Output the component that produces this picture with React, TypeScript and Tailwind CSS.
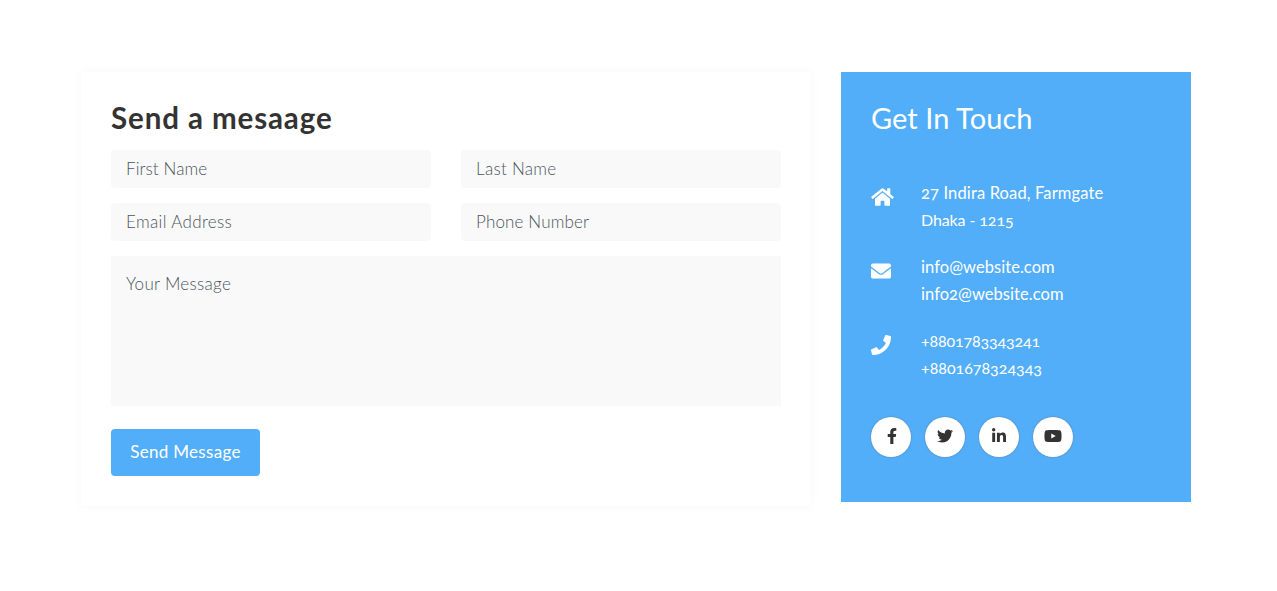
import type { ReactNode } from 'react';
import {
  FaHome,
  FaEnvelope,
  FaPhone,
  FaFacebookF,
  FaTwitter,
  FaLinkedinIn,
  FaYoutube,
} from 'react-icons/fa';

const field =
  'block h-[38px] w-full rounded bg-[#f9f9f9] px-[15px] pb-0.5 text-[17px] font-light text-[#4c565e] placeholder:text-[#4c565e] placeholder:opacity-100 outline-none';

function ContactRow({ icon, children }: { icon: ReactNode; children: ReactNode }) {
  return (
    <div className="flex h-[54px]">
      <div className="w-[50px] shrink-0 pt-[7px] text-[20px]">{icon}</div>
      <div className="-mt-px flex flex-col text-base leading-[27px] whitespace-nowrap [font-variant-numeric:oldstyle-nums]">
        {children}
      </div>
    </div>
  );
}

function Social({ label, children }: { label: string; children: ReactNode }) {
  return (
    <a
      href="#"
      aria-label={label}
      className="flex size-10 items-center justify-center rounded-full bg-white pb-0.5 text-base text-[#333] shadow-[0_0_2px_rgba(90,80,70,0.5)]"
    >
      {children}
    </a>
  );
}

export default function App() {
  return (
    <main className="flex h-[591px] w-[1277px] items-start gap-[30px] bg-white pt-[72px] pl-[81px] font-[Lato,sans-serif]">
      <section className="h-[434px] w-[730px] bg-white px-[30px] pt-[29px] shadow-[0_0_10px_rgba(0,0,0,0.04)]">
        <h2 className="h-[49px] text-[29.5px] leading-[34px] font-bold text-[#333]">
          <span className="tracking-[0.9px]">Send a mesaage</span>
        </h2>
        <form>
          <div className="grid grid-cols-2 gap-x-[30px] gap-y-[15px]">
            <input className={`${field} tracking-[0.1px]`} placeholder="First Name" />
            <input className={`${field} tracking-[0.3px]`} placeholder="Last Name" />
            <input className={`${field} tracking-[0.35px]`} placeholder="Email Address" />
            <input className={`${field} tracking-[0.15px]`} placeholder="Phone Number" />
            <textarea
              className="col-span-2 block h-[150px] resize-none bg-[#f9f9f9] px-[15px] pt-4 text-[17px] leading-6 font-light tracking-[0.3px] text-[#4c565e] outline-none placeholder:text-[#4c565e] placeholder:opacity-100"
              placeholder="Your Message"
            />
          </div>
          <button
            type="button"
            className="mt-[23px] flex h-[47px] w-[149px] items-center justify-center rounded bg-[#53aefa] pb-0.5 text-[17px] tracking-[0.3px] whitespace-nowrap text-white"
          >
            <span>Send Message</span>
          </button>
        </form>
      </section>
      <aside className="h-[430px] w-[350px] bg-[#53aefa] px-[30px] pt-[29px] text-white">
        <h2 className="h-[79px] text-[29px] leading-[34px] font-normal tracking-[0.05px]">
          <span>Get In Touch</span>
        </h2>
        <div className="flex flex-col gap-5">
          <ContactRow icon={<FaHome className="h-5 w-[23px]" />}>
            <span className="-mb-px pt-px text-[16.5px] tracking-[0.14px]">27 Indira Road, Farmgate</span>
            <span className="tracking-[-0.1px]">Dhaka - 1215</span>
          </ContactRow>
          <ContactRow icon={<FaEnvelope />}>
            <span className="-mb-px pt-px text-[16.5px] tracking-[0.06px]">info@website.com</span>
            <span className="-mb-px pt-px text-[16.5px] tracking-[0.05px]">info2@website.com</span>
          </ContactRow>
          <ContactRow icon={<FaPhone />}>
            <span className="tracking-[-0.14px]">+8801783343241</span>
            <span>+8801678324343</span>
          </ContactRow>
        </div>
        <div className="mt-[35px] flex gap-[14px]">
          <Social label="Facebook"><FaFacebookF className="ml-px" /></Social>
          <Social label="Twitter"><FaTwitter /></Social>
          <Social label="LinkedIn"><FaLinkedinIn /></Social>
          <Social label="YouTube"><FaYoutube className="size-[18px]" /></Social>
        </div>
      </aside>
    </main>
  );
}
